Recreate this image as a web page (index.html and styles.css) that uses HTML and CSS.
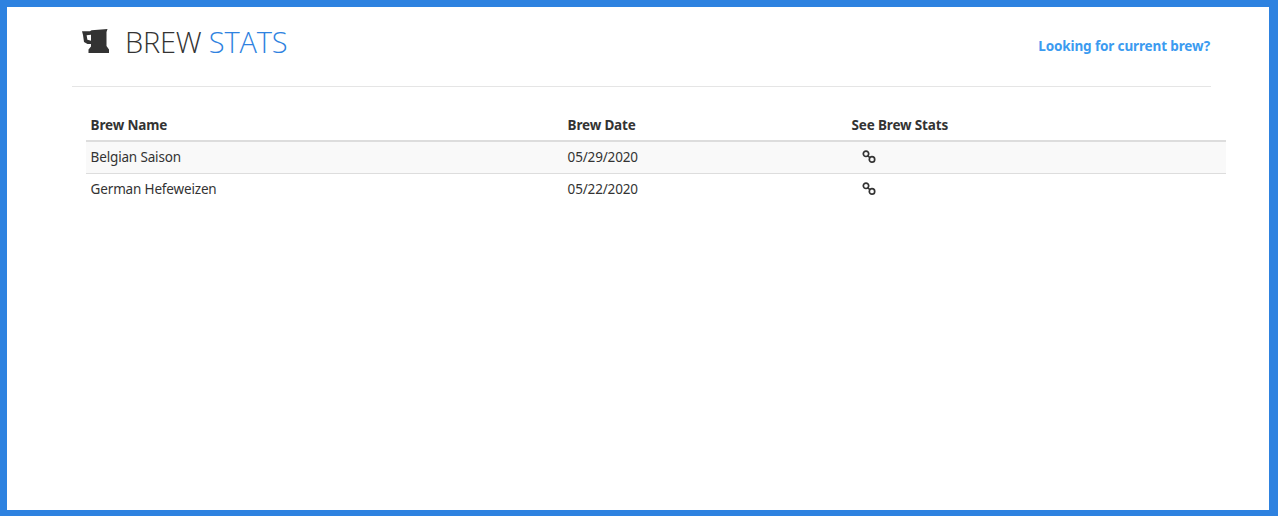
FILE: index.html
```html
<!DOCTYPE html>
<html lang="en">
<head>
<meta charset="utf-8">
<title>Brew Stats</title>
<link rel="stylesheet" href="styles.css">
</head>
<body>
<div class="frame">
  <header class="header">
    <div class="brand">
      <svg class="mug" viewBox="0 0 27 24" aria-hidden="true"><path fill-rule="evenodd" d="M0 2.2 L8 2.2 L9.5 1.2 L25.5 0 L24.5 3 L24.5 17 L27 20.5 L27 24 L6.5 24 L6.5 20.5 L9 17.5 L9 15 L5.5 15 L2 13 L1 6 Z M4.6 6.2 L5.4 10.8 L9 11.8 L9 5.8 Z"/></svg>
      <h1 class="title">BREW <span class="accent">STATS</span></h1>
    </div>
    <a class="current" href="#">Looking for current brew?</a>
  </header>
  <table class="brews">
    <thead>
      <tr><th class="c1">Brew Name</th><th class="c2">Brew Date</th><th>See Brew Stats</th></tr>
    </thead>
    <tbody>
      <tr class="odd"><td>Belgian Saison</td><td>05/29/2020</td><td><a class="link" href="#"><svg class="chain" viewBox="0 0 14 14" aria-hidden="true"><circle cx="4" cy="3.8" r="2.7"/><circle cx="10" cy="9.4" r="2.7"/><path d="M5.4 5.6 L8 7.6"/></svg></a></td></tr>
      <tr><td>German Hefeweizen</td><td>05/22/2020</td><td><a class="link" href="#"><svg class="chain" viewBox="0 0 14 14" aria-hidden="true"><circle cx="4" cy="3.8" r="2.7"/><circle cx="10" cy="9.4" r="2.7"/><path d="M5.4 5.6 L8 7.6"/></svg></a></td></tr>
    </tbody>
  </table>
</div>
</body>
</html>
```

FILE: styles.css
```css
* { box-sizing: border-box; }
html, body { margin: 0; height: 100%; }
body { font-family: "Noto Sans", "Open Sans", sans-serif; color: #333; background: #fff; }
.frame { height: 516px; border-style: solid; border-color: #2e82e0; border-width: 7px 9px 6px 7px; padding: 0 0 0 65px; overflow: hidden; }
.header { width: 1139px; height: 80px; border-bottom: 1px solid #e5e5e5; display: flex; justify-content: space-between; align-items: flex-start; padding: 0 1px 0 10px; }
.brand { display: flex; align-items: flex-start; }
.mug { width: 27px; height: 24px; margin-top: 22px; fill: #333; flex: none; }
.title { margin: 15px 0 0 16px; font-family: "Open Sans", sans-serif; font-weight: 300; font-size: 29px; line-height: 40px; color: #333; letter-spacing: -0.2px; }
.accent { color: #2e82e0; }
.current { margin-top: 29px; font-size: 13.5px; line-height: 20px; font-weight: 700; color: #3b9bf0; text-decoration: none; letter-spacing: -0.13px; }
.brews { margin: 22px 0 0 14px; width: 1140px; border-collapse: collapse; table-layout: fixed; font-size: 13.5px; letter-spacing: -0.16px; }
th { text-align: left; font-weight: 700; height: 32px; padding: 5px 5px 5px 4.6px; line-height: 20px; border-bottom: 2px solid #ddd; vertical-align: bottom; }
td { height: 32px; padding: 5px 5px 5px 4.6px; line-height: 20px; border-bottom: 1px solid #ddd; }
tbody tr:last-child td { border-bottom: 0; }
.c1 { width: 477px; }
.c2 { width: 284px; }
.odd { background: #f9f9f9; }
.link { display: block; padding-left: 10px; height: 20px; padding-top: 3px; }
.chain { display: block; width: 14px; height: 14px; fill: none; stroke: #333; stroke-width: 1.7; }
```
